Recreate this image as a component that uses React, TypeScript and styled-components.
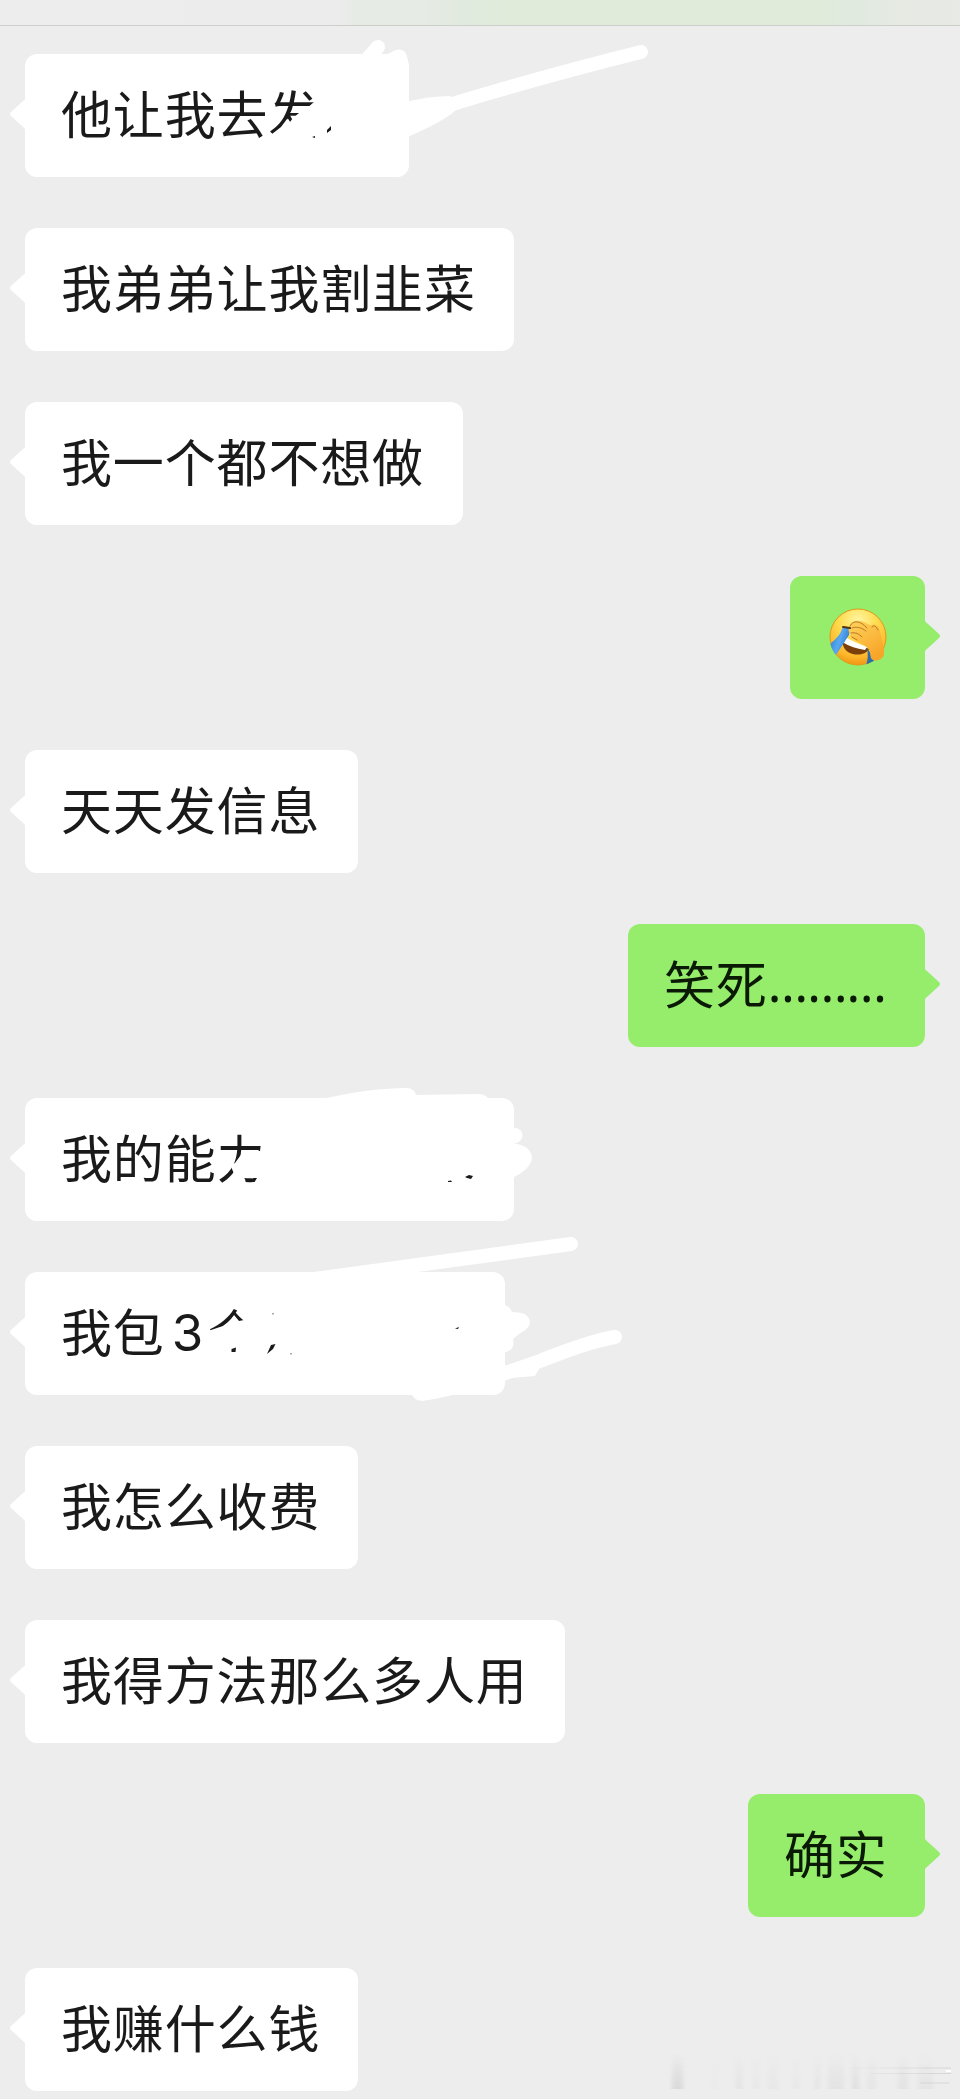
import React from "react";
import styled, { createGlobalStyle } from "styled-components";

const GlobalStyle = createGlobalStyle`
  * { box-sizing: border-box; }
  body { margin: 0; background: #ededed; }
`;

const Screen = styled.main`
  position: relative;
  width: 960px;
  height: 2099px;
  overflow: hidden;
  background: #ededed;
  font-family: "Noto Sans CJK SC", sans-serif;
`;

const TopBar = styled.header`
  height: 26px;
  border-bottom: 1px solid #cccfca;
  background: linear-gradient(
    90deg,
    #ededed 0,
    #ececec 335px,
    #e7ebe6 352px,
    #e7ebe5 415px,
    #e1eade 465px,
    #e1ebda 510px,
    #e1ebda 815px,
    #e0eadf 850px,
    #e6eae3 900px,
    #e7eae5 960px
  );
`;

const Thread = styled.section`
  display: flex;
  flex-direction: column;
  gap: 51px;
  padding: 28px 35px 0 25px;
`;

const Row = styled.div<{ $own?: boolean }>`
  position: relative;
  display: flex;
  justify-content: ${(p) => (p.$own ? "flex-end" : "flex-start")};
  height: 123px;
`;

const Bubble = styled.div<{ $own?: boolean; $width: number }>`
  position: relative;
  display: flex;
  align-items: center;
  width: ${(p) => p.$width}px;
  height: 123px;
  padding: 0 0 8px 36px;
  border-radius: 12px;
  background: ${(p) => (p.$own ? "#96ec6b" : "#ffffff")};
  color: ${(p) => (p.$own ? "#0b1a04" : "#1a1a1a")};
  font-size: 51px;
  line-height: 72px;
  letter-spacing: 0.85px;
  white-space: nowrap;
`;

const Tail = styled.svg<{ $own?: boolean }>`
  position: absolute;
  top: 42px;
  ${(p) => (p.$own ? "right: -16px; transform: scaleX(-1);" : "left: -16px;")}
  width: 17px;
  height: 36px;
  fill: ${(p) => (p.$own ? "#96ec6b" : "#ffffff")};
`;

const Digit = styled.span`
  margin: 7px 4px 0 7px;
  font-family: Inter, sans-serif;
  font-size: 51px;
`;

const Dots = styled.span`
  font-family: "Noto Sans", sans-serif;
  font-size: 51px;
  letter-spacing: -0.9px;
`;

const Scribble = styled.svg`
  position: absolute;
  left: -25px;
  top: -50px;
  width: 960px;
  height: 210px;
  fill: #fff;
  pointer-events: none;

  .line { fill: none; stroke: #fff; stroke-width: 14; stroke-linecap: round; stroke-linejoin: round; }
  .ink { fill: #1a1a1a; }
`;

const Emoji = styled.svg`
  width: 58px;
  height: 58px;
  margin: 7px 0 0 3px;
`;

const Watermark = styled.svg`
  position: absolute;
  right: 0;
  bottom: 0;
  width: 320px;
  height: 79px;
`;

const FaceEmoji = () => (
  <Emoji viewBox="0 0 58 58">
    <defs>
      <radialGradient id="face" cx=".5" cy=".2" r=".82">
        <stop offset="0" stopColor="#fff6a0" />
        <stop offset=".4" stopColor="#ffdc50" />
        <stop offset=".8" stopColor="#fdb62a" />
        <stop offset="1" stopColor="#ee9210" />
      </radialGradient>
      <linearGradient id="hand" x1="0" y1="0" x2=".6" y2="1">
        <stop offset="0" stopColor="#ffd45c" />
        <stop offset="1" stopColor="#f7a529" />
      </linearGradient>
      <linearGradient id="tear" x1="0" y1=".3" x2="1" y2=".7">
        <stop offset="0" stopColor="#2378c9" />
        <stop offset=".5" stopColor="#58a9f2" />
        <stop offset="1" stopColor="#2a70c4" />
      </linearGradient>
      <clipPath id="round"><circle cx="29" cy="29" r="28.5" /></clipPath>
    </defs>
    <circle cx="29" cy="29" r="28" fill="url(#face)" stroke="#e59818" strokeWidth="1" />
    <g clipPath="url(#round)">
      <path d="M14 31 Q25 35 40 41 C36 49 17 49 14 37 Z" fill="#7b3f0b" />
      <path d="M16 29 Q25 34 38 39 L36 42 Q23 40 15 35 Z" fill="#fff" />
      <path d="M14 19 L21 21 L20 27 L7 47 L-1 42 L2 35 Q11 28 13 21 Z" fill="url(#tear)" />
      <path d="M38 40 L45 50 L45 58 L37 58 Q40 48 38 40 Z" fill="#286fac" />
    </g>
    <path
      d="M20 20 C20 14 26 12 31 13 C38 14 40 18 43 17 C48 15 51 20 52 28 C53 34 57 44 54 49 C51 53 44 54 42 50 C41 46 41 41 38 39 C34 36 29 34 26 32 C21 30 20 27 22 26 C19 24 19 21 21 20 Z"
      fill="url(#hand)"
    />
    <path d="M14 19 L21 20" fill="none" stroke="#4f3211" strokeWidth="2" strokeLinecap="round" />
    <path
      d="M21 18 C24 12 31 12 38 20 M23 20 C28 18 33 20 37 23 M22 25 C27 24 30 26 33 29 M23 29 L28 32 M43 19 C43 17 47 17 49 22"
      fill="none"
      stroke="#a8651a"
      strokeWidth=".8"
      strokeLinecap="round"
    />
  </Emoji>
);

interface MessageProps {
  own?: boolean;
  width: number;
  children: React.ReactNode;
  marks?: React.ReactNode;
  top?: number;
}

const Message = ({ own, width, children, marks, top = 0 }: MessageProps) => (
  <Row $own={own}>
    <Bubble $own={own} $width={width}>
      <Tail $own={own} viewBox="0 0 17 36">
        <path d="M17 1 Q16 4 13 6 L2 16 Q0 18 2 20 L13 30 Q16 32 17 35 Z" />
      </Tail>
      {children}
    </Bubble>
    {marks && <Scribble viewBox={`0 ${top - 50} 960 210`}>{marks}</Scribble>}
  </Row>
);

const marksFirst = (
  <>
    <path d="M318 84 L314 102 L306 109 L293 109 L290 113 L299 113 L293 118 L290 122 L287 119 L281 127 L272 134 L264 141 V146 H350 V84 Z" />
    <path className="line" d="M368 58 L378 47" />
    <path d="M380 58 Q389 53 396 50 Q404 48 407 56 L409 68 Z" />
    <path d="M405 102 Q430 96 450 96 L459 107 Q448 120 405 138 Z" />
    <path className="line" d="M449 105 Q548 75 641 52" />
    <path className="ink" d="M327 130 L331 126 L331 130 L327 133 Z M312 137 L315 136 L315 138 Z" />
  </>
);

const marksAbility = (
  <>
    <path d="M262 1135 L260 1151 L243 1152 L235 1163 L231 1165 L232 1169 L235 1176 L243 1178 L257 1178 L254 1183 L270 1190 V1135 Z" />
    <path d="M322 1099 Q370 1088 407 1088 Q415 1089 416 1095 L478 1094 Q485 1094 489 1099 L480 1110 H330 Z" />
    <circle cx="515" cy="1135.500" r="7.500" />
    <path d="M512 1143 Q531 1145 532 1158 Q530 1170 512 1178 Z" />
    <path className="ink" d="M448 1181 L451 1180.500 L452 1182 L448 1182 Z M465 1177 L469 1175 L473 1176 L471 1179 L467 1178 Z" />
  </>
);

const marksPackage = (
  <>
    <path d="M246 1305 L244 1320 L239 1321 L234 1315 L231 1320 L223 1326 L211 1330 L205 1335 V1364 H264 V1305 Z" />
    <path className="line" d="M300 1281 L571 1244" />
    <path d="M500 1304 Q510 1305 512 1312 Q530 1312 530 1323 Q529 1329 519 1334 L513 1339 Q516 1351 502 1353 Z" />
    <path className="line" d="M500 1375 L540 1361 Q590 1341 615 1337" />
    <path d="M500 1366 L540 1362 L539 1369 L535 1376 L500 1379 Z" />
    <path d="M410 1390 Q413 1401 422 1401 Q438 1399 456 1394 L450 1388 Z" />
    <path className="ink" d="M231.500 1349 L236 1347.500 L235.500 1352 H231.500 Z M267 1354 L271 1345 L275.500 1344 L273 1349 Z" />
    <path className="ink" d="M455 1328.500 L459 1327 L458 1329 Z" />
    <path d="M272 1313 h2 v1.500 h-2 Z M290 1353 h2 v1.500 h-2 Z" fill="#aaa" />
  </>
);

const smears = [
  [32, 11, 0.65], [72, 6, 0.08], [96, 6, 0.3], [113, 6, 0.18], [128, 10, 0.18], [153, 6, 0.18],
  [175, 5, 0.3], [188, 16, 0.32], [212, 7, 0.45], [227, 9, 0.25], [258, 10, 0.35], [278, 15, 0.28],
];

export default function App() {
  return (
    <Screen>
      <GlobalStyle />
      <TopBar />
      <Thread>
        <Message width={384} top={54} marks={marksFirst}>他让我去发</Message>
        <Message width={489}>我弟弟让我割韭菜</Message>
        <Message width={438}>我一个都不想做</Message>
        <Message own width={135}><FaceEmoji /></Message>
        <Message width={333}>天天发信息</Message>
        <Message own width={297}>笑死<Dots>………</Dots></Message>
        <Message width={489} top={1098} marks={marksAbility}>我的能力</Message>
        <Message width={480} top={1272} marks={marksPackage}>我包<Digit>3</Digit>个</Message>
        <Message width={333}>我怎么收费</Message>
        <Message width={540}>我得方法那么多人用</Message>
        <Message own width={177}>确实</Message>
        <Message width={333}>我赚什么钱</Message>
      </Thread>
      <Watermark viewBox="0 0 320 79">
        <defs>
          <linearGradient id="fade" x1="0" y1="0" x2="0" y2="1">
            <stop offset="0" stopColor="#cfcfcf" stopOpacity="0" />
            <stop offset="1" stopColor="#cfcfcf" />
          </linearGradient>
          <linearGradient id="trail" x1="0" y1="0" x2="1" y2="0">
            <stop offset="0" stopColor="#bdbdbd" stopOpacity="0" />
            <stop offset="1" stopColor="#bdbdbd" />
          </linearGradient>
          <filter id="soft" x="-50%" y="-20%" width="200%" height="140%">
            <feGaussianBlur stdDeviation="2 0.6" />
          </filter>
        </defs>
        {smears.map(([x, w, o]) => (
          <rect key={x} x={x} y="33" width={w} height="36" fill="url(#fade)" opacity={o} filter="url(#soft)" />
        ))}
        <path d="M200 47.500 H311 V48.500 H200 Z M230 53 H311 V54 H230 Z M280 62.500 H309 V63.500 H280 Z" fill="url(#trail)" opacity=".5" />
        <path d="M306 51 H311" stroke="#fff" strokeWidth="2" />
      </Watermark>
    </Screen>
  );
}
